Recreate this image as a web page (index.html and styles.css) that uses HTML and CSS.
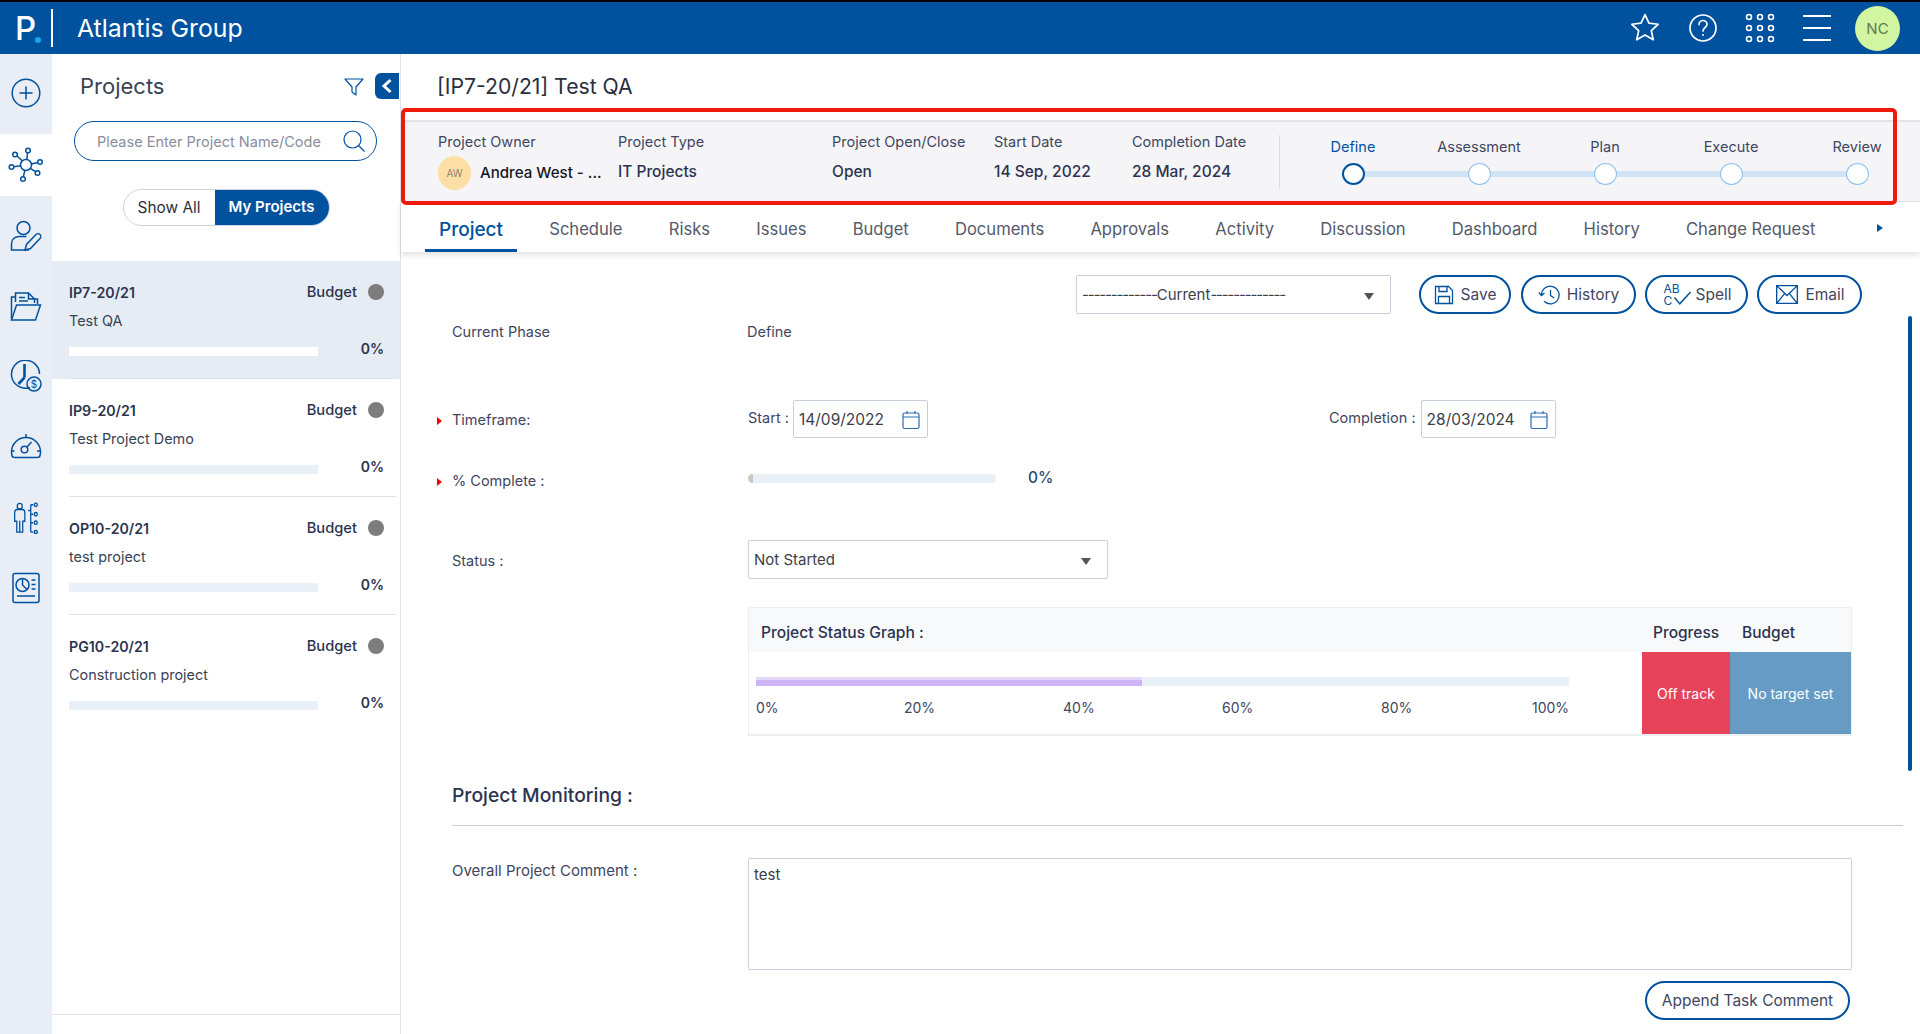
FILE: index.html
```html
<!DOCTYPE html>
<html lang="en">
<head>
<meta charset="utf-8">
<title>Atlantis Group</title>
<link rel="stylesheet" href="styles.css">
</head>
<body>
<div class="app">
  <header class="topbar">
    <div class="brand"><span class="logo">P<i class="logo-dot"></i></span><span class="brand-sep"></span><span class="brand-name">Atlantis Group</span></div>
    <div class="top-actions">
      <svg class="ti" width="30" height="30" viewBox="1 1 28 28" fill="none" stroke="#fff" stroke-width="1.6" stroke-linejoin="round"><path d="M15 2.5l3.7 8 8.6 1-6.4 5.9 1.8 8.6-7.7-4.4-7.7 4.4 1.8-8.6L2.7 11.500l8.600-1z"/></svg>
      <svg class="ti" width="30" height="30" viewBox="0 0 30 30" fill="none" stroke="#fff" stroke-width="1.7"><circle cx="15" cy="15" r="13"/><path d="M11 11.500c0-2.500 2-4 4-4s4 1.500 4 3.800c0 3.200-4 3.400-4 6.700" stroke-linecap="round"/><circle cx="15" cy="22" r="1" fill="#fff" stroke="none"/></svg>
      <svg class="ti" width="30" height="30" viewBox="0 0 30 30" fill="none" stroke="#fff" stroke-width="1.600"><circle cx="4" cy="4" r="2.500"/><circle cx="15" cy="4" r="2.500"/><circle cx="26" cy="4" r="2.500"/><circle cx="4" cy="15" r="2.500"/><circle cx="15" cy="15" r="2.500"/><circle cx="26" cy="15" r="2.500"/><circle cx="4" cy="26" r="2.500"/><circle cx="15" cy="26" r="2.500"/><circle cx="26" cy="26" r="2.500"/></svg>
      <svg class="ti" width="28" height="28" viewBox="0 0 28 28" fill="none" stroke="#fff" stroke-width="2"><path d="M0 2h28M0 14h28M0 26h28"/></svg>
      <span class="avatar-nc">NC</span>
    </div>
  </header>
  <div class="body-row">
    <nav class="rail">
      <div class="rail-top">
        <svg width="30" height="30" viewBox="0 0 30 30" class="ri"><circle cx="15" cy="15" r="13.800"/><path d="M15 9v12M9 15h12" stroke-linecap="round"/></svg>
      </div>
      <div class="rail-active">
        <svg width="36" height="36" viewBox="0 0 36 36" class="ri"><circle cx="18" cy="18" r="5.500"/><circle cx="7" cy="7.500" r="2.300"/><circle cx="20" cy="3.500" r="2.300"/><circle cx="32" cy="15" r="2.300"/><circle cx="29.500" cy="26" r="2.300"/><circle cx="15" cy="32" r="2.300"/><circle cx="3.500" cy="20" r="2.300"/><path d="M9 9l5.500 5M19.500 5.800l-.6 6.700M29.700 15.500l-6.300 1.500M27.600 24.700l-5.300-3.300M15.400 29.700l1.400-6.300M5.800 19.800l6.700-1"/></svg>
      </div>
      <div class="rail-list">
        <svg width="32" height="32" viewBox="0 0 32 32" class="ri"><circle cx="13.500" cy="9" r="6.500"/><path d="M19 31H1.500v-6c0-5 3.500-7.500 8-7.500h7"/><path d="M15 31l1.500-5.500L26 15.500c1-1 3-1 4 0s1 3 0 4L20.500 29.500z"/></svg>
        <svg width="32" height="32" viewBox="0 0 32 32" class="ri"><path d="M1.500 29V7h4M5.500 12V3h13l6 6v4M9 7.500h6M9 11h9M18.500 3v6h6"/><path d="M1.500 30l5-15h24l-5 15z"/><path d="M24.500 9h3v5"/></svg>
        <svg width="32" height="32" viewBox="0 0 32 32" class="ri"><path d="M20 27.500A14 14 0 1 1 29.500 14"/><path d="M14.500 4v13.500" stroke-width="2.600"/><path d="M14.500 17.500l-6 6.500" stroke-width="2.600"/><circle cx="24" cy="24" r="7"/><text x="24" y="28" class="ri-dollar">$</text></svg>
        <svg class="ri-up" width="32" height="28" viewBox="0 0 32 28" ><g class="ri"><path d="M4 25H2.500A13.500 13.500 0 0 1 1.500 20a14.500 14.500 0 0 1 29 0 13.500 13.500 0 0 1-1 5H28M4 25.500h24"/><circle cx="14.500" cy="17.500" r="3.300"/><path d="M17 15l4.500-5M16 2v3M1.500 19h3M27 19h3.500"/></g></svg>
        <svg width="27" height="32" viewBox="0 0 32 34" preserveAspectRatio="none" class="ri"><circle cx="8" cy="4.500" r="3"/><path d="M2 11c0-2 1-3 3-3h6c2 0 3 1 3 3v9.500h-2.500V32H4.500V20.500H2zM8 20v12"/><path d="M18 9h3M21 3v29M21 3h3M21 13h3M21 22h3M21 32h3"/><circle cx="27" cy="3" r="1.800"/><circle cx="27" cy="13" r="1.800"/><circle cx="27" cy="22" r="1.800"/><circle cx="27" cy="32" r="1.800"/></svg>
        <svg width="30" height="32" viewBox="0 0 30 32" class="ri"><rect x="2" y="1.500" width="26" height="29" rx="2"/><circle cx="11.500" cy="13" r="6.500"/><path d="M11.500 6.500V13l4.500 4.500M20.500 8h4M20.500 12.500h4M20.500 17h4M6 24h18"/></svg>
      </div>
    </nav>

    <aside class="panel">
      <div class="panel-head">
        <h2 class="panel-title">Projects</h2>
        <svg class="filter" width="20" height="18" viewBox="0 0 20 18" fill="none" stroke="#00529f" stroke-width="1.200" stroke-linejoin="round"><path d="M1 1h18l-7 8v8l-4-3V9z"/></svg>
        <span class="collapse"><svg width="12" height="16" viewBox="0 0 12 16" fill="none" stroke="#fff" stroke-width="3"><path d="M9.500 2L3 8l6.500 6"/></svg></span>
      </div>
      <div class="search">
        <span class="search-ph">Please Enter Project Name/Code</span>
        <svg width="22" height="22" viewBox="0 0 22 22" fill="none" stroke="#00529f" stroke-width="1.200"><circle cx="9.500" cy="9.500" r="8.500"/><path d="M15.500 15.500l6 6"/></svg>
      </div>
      <div class="toggle-wrap">
        <div class="toggle"><span class="tog-off">Show All</span><span class="tog-on">My Projects</span></div>
      </div>
      <div class="plist">
        <div class="pitem is-active"><div class="pi-row"><b class="pi-id">IP7-20/21</b><span class="pi-bud">Budget</span><i class="dot"></i></div><div class="pi-name">Test QA</div><div class="pi-row pi-prog"><div class="pi-bar"></div><b class="pi-pct">0%</b></div></div>
        <div class="pitem"><div class="pi-row"><b class="pi-id">IP9-20/21</b><span class="pi-bud">Budget</span><i class="dot"></i></div><div class="pi-name">Test Project Demo</div><div class="pi-row pi-prog"><div class="pi-bar"></div><b class="pi-pct">0%</b></div></div>
        <div class="pitem"><div class="pi-row"><b class="pi-id">OP10-20/21</b><span class="pi-bud">Budget</span><i class="dot"></i></div><div class="pi-name">test project</div><div class="pi-row pi-prog"><div class="pi-bar"></div><b class="pi-pct">0%</b></div></div>
        <div class="pitem no-line"><div class="pi-row"><b class="pi-id">PG10-20/21</b><span class="pi-bud">Budget</span><i class="dot"></i></div><div class="pi-name">Construction project</div><div class="pi-row pi-prog"><div class="pi-bar"></div><b class="pi-pct">0%</b></div></div>
      </div>
      <div class="panel-foot"></div>
    </aside>

    <main class="main">
      <h1 class="title">[IP7-20/21] Test QA</h1>
      <section class="strip">
        <div class="meta">
          <div class="mcol c1"><span class="ml">Project Owner</span><span class="owner"><span class="aw">AW</span><b class="mv dark">Andrea West - ...</b></span></div>
          <div class="mcol c2"><span class="ml">Project Type</span><b class="mv">IT Projects</b></div>
          <div class="mcol c3"><span class="ml">Project Open/Close</span><b class="mv">Open</b></div>
          <div class="mcol c4"><span class="ml">Start Date</span><b class="mv">14 Sep, 2022</b></div>
          <div class="mcol c5"><span class="ml">Completion Date</span><b class="mv">28 Mar, 2024</b></div>
        </div>
        <div class="stepper">
          <div class="step is-cur"><span class="sl">Define</span><i class="sc"></i></div>
          <div class="step"><span class="sl">Assessment</span><i class="sc"></i></div>
          <div class="step"><span class="sl">Plan</span><i class="sc"></i></div>
          <div class="step"><span class="sl">Execute</span><i class="sc"></i></div>
          <div class="step"><span class="sl">Review</span><i class="sc"></i></div>
        </div>
      </section>
      <div class="redbox"></div>
      <nav class="tabs">
        <span class="tab is-on">Project</span><span class="tab">Schedule</span><span class="tab">Risks</span><span class="tab">Issues</span><span class="tab">Budget</span><span class="tab">Documents</span><span class="tab">Approvals</span><span class="tab">Activity</span><span class="tab">Discussion</span><span class="tab">Dashboard</span><span class="tab">History</span><span class="tab">Change Request</span>
        <i class="tab-more"></i>
      </nav>
      <div class="form">
        <div class="scroll-thumb"></div>
        <div class="toolbar">
          <div class="sel sel-cur"><span><span class="dashes">-------------</span>Current<span class="dashes">-------------</span></span><i class="caret"></i></div>
          <span class="btn btn-save"><svg width="20" height="20" viewBox="0 0 20 20" fill="none" stroke="#00529f" stroke-width="1.300"><path d="M1.500 1.500h13l4 4v13h-17zM5 1.500v5h8v-5M4.500 18.500v-7h11v7"/></svg>Save</span>
          <span class="btn btn-hist"><svg width="22" height="20" viewBox="0 0 22 20" fill="none" stroke="#00529f" stroke-width="1.300"><path d="M3.500 10a8.800 8.800 0 1 1 2.600 6.300M12.500 5v5.500l3.500 2.500"/><path d="M0.800 7.500l2.700 3 3-2.500"/></svg>History</span>
          <span class="btn btn-spell"><span class="spell-ic"><span class="abc">AB<br>C</span><svg class="spell-check" width="19" height="15" viewBox="0 0 17 14" fill="none" stroke="#00529f" stroke-width="1.400"><path d="M1 6l5 6L16 1"/></svg></span>Spell</span>
          <span class="btn btn-mail"><svg width="22" height="19" viewBox="0 0 20 18" preserveAspectRatio="none" fill="none" stroke="#00529f" stroke-width="1.200"><path d="M.6.600h18.800v16.800H.6zM.6.600L10 10 19.400.6M.6 17.400l7-9M19.400 17.400l-7-9"/></svg>Email</span>
        </div>
        <div class="row row-phase"><span class="flabel">Current Phase</span><span class="fval">Define</span></div>
        <div class="row row-time">
          <span class="flabel req">Timeframe:</span>
          <span class="date-group"><span class="dlabel">Start :</span><span class="date">14/09/2022<svg width="18" height="20" viewBox="0 0 18 20" fill="none" stroke="#2c6cb0" stroke-width="1.200"><rect x="1" y="3" width="16" height="15.500" rx="1.500"/><path d="M1 7h16M5 1v3M13 1v3"/></svg></span></span>
          <span class="date-group dg2"><span class="dlabel">Completion :</span><span class="date">28/03/2024<svg width="18" height="20" viewBox="0 0 18 20" fill="none" stroke="#2c6cb0" stroke-width="1.200"><rect x="1" y="3" width="16" height="15.500" rx="1.500"/><path d="M1 7h16M5 1v3M13 1v3"/></svg></span></span>
        </div>
        <div class="row row-pct"><span class="flabel req">% Complete :</span><div class="pbar"><i class="pbar-in"></i></div><b class="pct">0%</b></div>
        <div class="row row-status"><span class="flabel">Status :</span><div class="sel sel-status"><span>Not Started</span><i class="caret"></i></div></div>
        <div class="graph">
          <div class="g-head"><b class="g-title">Project Status Graph :</b><b class="g-prog">Progress</b><b class="g-bud">Budget</b></div>
          <div class="g-body">
            <div class="g-chart">
              <div class="g-track"><div class="g-fill"></div></div>
              <div class="g-ticks"><span class="t0">0%</span><span>20%</span><span>40%</span><span>60%</span><span class="t4">80%</span><span class="t5">100%</span></div>
            </div>
            <div class="g-off">Off track</div>
            <div class="g-none">No target set</div>
          </div>
        </div>
        <h3 class="mon">Project Monitoring :</h3>
        <div class="row row-comment"><span class="flabel">Overall Project Comment :</span><div class="ta">test</div></div>
        <div class="append-row"><span class="btn btn-append">Append Task Comment</span></div>
      </div>
    </main>
  </div>
</div>
</body>
</html>
```
FILE: styles.css
```css
* { box-sizing: border-box; }
html, body { margin: 0; padding: 0; height: 100%; overflow: hidden; }
body { font-family: "Inter", "Liberation Sans", sans-serif; color: #2c3350; background: #fff; font-size: 14px; }
b { font-weight: 500; }
i { display: block; }
.app { height: 1034px; display: flex; flex-direction: column; border-top: 2px solid #000; }

.topbar { height: 52px; background: #00529f; color: #fff; display: flex; align-items: center; justify-content: space-between; flex: none; }
.brand { display: flex; align-items: center; }
.logo { font-size: 33px; font-weight: 500; width: 51px; padding-left: 15px; position: relative; line-height: 40px; }
.logo-dot { position: absolute; left: 35px; top: 29px; width: 6px; height: 6px; border-radius: 50%; background: #16a7f0; }
.brand-sep { width: 2px; height: 38px; background: #fff; }
.brand-name { font-size: 24.800px; margin-left: 24px; }
.top-actions { display: flex; align-items: center; padding-right: 20px; }
.ti { margin-right: 27px; }
.ti:nth-child(1) { margin-left: -1px; margin-right: 28px; }
.ti:nth-child(3) { margin-right: 28px; }
.ti:nth-child(4) { margin-right: 24px; }
.avatar-nc { width: 45px; height: 45px; border-radius: 50%; background: #d1f5a0; color: #5f7a55; display: flex; align-items: center; justify-content: center; font-size: 15px; }

.body-row { flex: 1; display: flex; min-height: 0; }
.rail { width: 52px; background: #e9edf5; flex: none; display: flex; flex-direction: column; }
.rail-top { height: 80px; padding-bottom: 2px; display: flex; align-items: center; justify-content: center; }
.rail-active { height: 62px; background: #fff; display: flex; align-items: center; justify-content: center; }
.rail-list { display: grid; grid-auto-rows: 32px; row-gap: 38.700px; justify-items: center; align-items: center; padding-top: 23px; }
.ri { fill: none; stroke: #00529f; stroke-width: 1.500; }
.ri-up { margin-top: -2px; }
.ri-dollar { font-size: 10px; text-anchor: middle; fill: #00529f; stroke: none; }

.panel { width: 349px; flex: none; border-right: 1px solid #dfe1e6; display: flex; flex-direction: column; }
.panel-head { display: flex; align-items: center; height: 56px; padding: 8px 0 0 28px; }
.panel-title { margin: 0; font-size: 22px; font-weight: 400; color: #3b4256; flex: 1; }
.filter { margin-right: 11px; margin-top: 2px; }
.collapse { width: 24px; height: 26px; background: #00529f; border-radius: 6px 0 0 6px; display: flex; align-items: center; justify-content: center; margin-right: 1px; }
.search { margin: 11px 0 0 22px; width: 303px; height: 40px; border: 1px solid #00529f; border-radius: 20px; display: flex; align-items: center; justify-content: space-between; padding: 0 11px 0 22px; }
.search-ph { font-size: 14.500px; color: #8a8d9c; }
.toggle-wrap { display: flex; justify-content: center; padding: 28px 0 0 0; }
.toggle { display: flex; width: 207px; height: 37px; border: 1px solid #ccd4de; border-radius: 19px; overflow: hidden; font-size: 15px; }
.tog-off { width: 91px; font-size: 15.400px; display: flex; align-items: center; justify-content: center; color: #2a2f3d; }
.tog-on { flex: 1; background: #00529f; color: #fff; font-weight: 600; display: flex; align-items: center; justify-content: center; padding-bottom: 3px; }
.plist { margin-top: 35px; flex: 1; }
.pitem { height: 118px; padding: 22px 16px 0 17px; position: relative; }
.pitem::after { content: ""; position: absolute; left: 17px; right: 4px; bottom: 0; height: 1px; background: #dfe1e6; }
.pitem.no-line::after { display: none; }
.pitem.is-active { background: #e5ecf4; }
.pi-row { display: flex; align-items: center; }
.pi-id { flex: 1; font-size: 14.200px; color: #2c3350; font-weight: 600; }
.pi-bud { font-size: 14.700px; font-weight: 500; color: #2c3350; margin-right: 11px; }
.dot { width: 16px; height: 16px; border-radius: 50%; background: #7d7d7d; }
.pi-name { font-size: 14.400px; color: #3b4256; margin-top: 11px; }
.pi-prog { margin-top: 9px; align-items: flex-start; height: 22px; }
.pi-bar { width: 249px; height: 9px; background: #e9f0f7; margin-top: 9px; }
.is-active .pi-bar { background: #fff; }
.pi-pct { margin-left: auto; margin-top: 2px; font-size: 14px; font-weight: 600; color: #2c3350; }
.panel-foot { height: 20px; border-top: 1px solid #dfe1e6; }

.main { flex: 1; position: relative; min-width: 0; display: flex; flex-direction: column; }
.title { margin: 0; font-size: 21.200px; font-weight: 400; color: #2a2f3d; height: 66px; padding: 19px 0 0 36px; }
.strip { height: 82px; background: #f5f5f8; border-top: 2px solid #e3e4e8; display: flex; padding-left: 37px; border-bottom: 1px solid #e3e4e8; flex: none; }
.redbox { position: absolute; z-index: 2; left: 0; top: 54px; width: 1496px; height: 97px; border: 4px solid #f01a0a; border-radius: 5px; pointer-events: none; }
.meta { display: flex; padding-top: 11px; height: 66px; flex: none; }
.mcol { display: flex; flex-direction: column; }
.c1 { width: 180px; } .c2 { width: 214px; } .c3 { width: 162px; } .c4 { width: 138px; } .c5 { width: 147px; }
.ml { font-size: 14.500px; color: #3f4660; line-height: 18px; }
.mv { font-size: 15.500px; color: #2c3350; line-height: 22px; margin-top: 10px; }
.mv.dark { color: #14171f; margin-top: 0; font-size: 15.100px; }
.owner { display: flex; align-items: center; gap: 9px; margin-top: 5px; }
.aw { width: 33px; height: 34px; border-radius: 50%; background: #fddfa5; color: #8c8577; font-size: 10px; display: flex; align-items: center; justify-content: center; }
.stepper { flex: none; width: 640px; display: flex; position: relative; margin-top: 13px; height: 54px; border-left: 1px solid #dcdde2; padding-left: 10px; }
.stepper::before { content: ""; position: absolute; left: 72px; width: 504px; top: 36px; height: 6px; background: #d0e4f6; }
.step { width: 126px; flex: none; display: flex; flex-direction: column; align-items: center; position: relative; }
.sl { font-size: 14.500px; color: #3f4660; line-height: 18px; margin-top: 3px; white-space: nowrap; }
.sc { width: 23px; height: 22px; border-radius: 50%; background: #fff; border: 1px solid #8fc0ec; margin-top: 7px; position: relative; }
.is-cur .sl { color: #00529f; }
.is-cur .sc { border: 2px solid #00529f; }

.tabs { height: 50px; display: flex; align-items: stretch; gap: 18.200px; padding-left: 24px; position: relative; box-shadow: 0 3px 6px rgba(0,0,0,.12); flex: none; background: #fff; }
.tab { padding: 4px 14px 0; font-size: 16.600px; color: #555a6a; display: flex; align-items: center; white-space: nowrap; }
.tab.is-on { color: #00529f; font-weight: 500; border-bottom: 3px solid #00529f; padding: 7px 14px 0; font-size: 19px; }
.tab-more { position: absolute; right: 37px; top: 22px; width: 0; height: 0; border-left: 6px solid #00529f; border-top: 4px solid transparent; border-bottom: 4px solid transparent; }

.form { flex: 1; position: relative; padding-left: 51px; }
.scroll-thumb { position: absolute; left: 1507px; top: 64px; width: 4px; height: 455px; background: #00529f; border-radius: 2px; }
.toolbar { display: flex; align-items: center; padding: 23px 0 0 624px; height: 62px; }
.sel { display: flex; align-items: center; justify-content: space-between; border: 1px solid #c8d0dc; height: 39px; padding: 0 16px 0 5px; font-size: 15px; color: #3c3f48; border-radius: 2px; }
.dashes { letter-spacing: -1.150px; }
.sel-cur { width: 315px; margin-right: 28px; }
.caret { width: 0; height: 0; border-top: 7px solid #555; border-left: 5px solid transparent; border-right: 5px solid transparent; margin-top: 3px; }
.btn { display: inline-flex; align-items: center; justify-content: center; gap: 7px; height: 39px; border: 2px solid #00529f; border-radius: 20px; font-size: 15.500px; color: #3f4660; margin-right: 10px; white-space: nowrap; }
.btn-save { width: 92px; } .btn-hist { width: 115px; margin-right: 9px; } .btn-spell { width: 103px; gap: 4px; padding-left: 2px; margin-right: 9px; } .btn-mail { width: 105px; padding-left: 2px; }
.spell-ic { display: flex; align-items: flex-end; }
.abc { font-size: 12px; line-height: 12px; color: #00529f; }
.spell-check { margin-left: -7px; margin-bottom: 1px; }
.row { position: relative; display: flex; }
.flabel { width: 296px; flex: none; font-size: 14.500px; color: #3f4660; }
.flabel.req { position: relative; }
.flabel.req::before { content: ""; position: absolute; left: -15px; top: 6px; border-left: 5px solid #f00; border-top: 4.500px solid transparent; border-bottom: 4.500px solid transparent; }
.fval { font-size: 14.500px; color: #3f4660; margin-left: -1px; }
.row-phase { margin-top: 9px; height: 60px; }
.row-time { height: 72px; align-items: center; }
.date-group { display: flex; align-items: center; gap: 4px; width: 582px; }
.dg2 { width: 240px; justify-content: flex-start; margin-left: -1px; gap: 5px; }
.dlabel { font-size: 14.500px; color: #3f4660; margin-top: -4px; white-space: nowrap; }
.date { width: 135px; height: 38px; border: 1px solid #c8d0dc; border-radius: 2px; display: flex; align-items: center; justify-content: space-between; padding: 1px 7px 0 5px; font-size: 15.500px; color: #3c3f48; }
.row-pct { height: 67px; align-items: flex-start; padding-top: 18px; }
.row-pct .flabel { top: -1px; }
.pbar { width: 248px; height: 9px; background: #e9f0f7; border-radius: 5px; margin-top: 1px; overflow: hidden; }
.pbar-in { width: 5px; height: 9px; background: #c9c9bd; }
.pct { margin-left: 32px; font-size: 15.500px; color: #2c4a6e; margin-top: -5px; }
.row-status { height: 39px; margin-top: 18px; align-items: center; }
.row-status .flabel { margin-top: 2px; }
.sel-status { width: 360px; }
.graph { margin: 28px 0 0 296px; width: 1104px; height: 129px; border: 1px solid #eeeff1; border-bottom-width: 2px; display: flex; flex-direction: column; }
.g-head { height: 44px; background: #f8f9fb; display: flex; align-items: center; padding: 4px 0 0 12px; font-size: 15.500px; color: #2c3350; }
.g-title { width: 892px; font-size: 15.600px; }
.g-prog { width: 89px; }
.g-body { flex: 1; display: flex; }
.g-chart { width: 893px; padding: 25px 0 0 7px; }
.g-track { width: 813px; height: 9px; background: #e9f0f7; }
.g-fill { width: 386px; height: 9px; background: #cdb4f5; border-top: 3px solid #e4d8f9; }
.g-ticks { display: flex; font-size: 14px; margin-top: 13px; color: #3f4660; }
.g-ticks span { width: 159px; flex: none; }
.g-ticks .t0 { width: 148px; }
.g-ticks .t4 { width: 151px; }
.g-ticks .t5 { width: auto; }
.g-off { width: 88px; background: #e6425a; color: #fff; display: flex; align-items: center; justify-content: center; font-size: 14px; }
.g-none { width: 121px; background: #669cc4; color: #fff; display: flex; align-items: center; justify-content: center; font-size: 14px; }
.mon { margin: 47px 0 0; font-size: 19.300px; font-weight: 500; color: #2c3350; height: 43px; width: 1451px; border-bottom: 1px solid #ccced2; padding-bottom: 18px; }
.row-comment { margin-top: 32px; }
.row-comment .flabel { padding-top: 3px; font-size: 15px; }
.ta { width: 1104px; height: 112px; border: 1px solid #c8d0dc; padding: 6px 5px; font-size: 15px; color: #3c3f48; border-radius: 2px; }
.append-row { width: 1398px; display: flex; justify-content: flex-end; margin-top: 11px; }
.btn-append { width: 205px; margin-right: 0; font-size: 15.500px; }
```
